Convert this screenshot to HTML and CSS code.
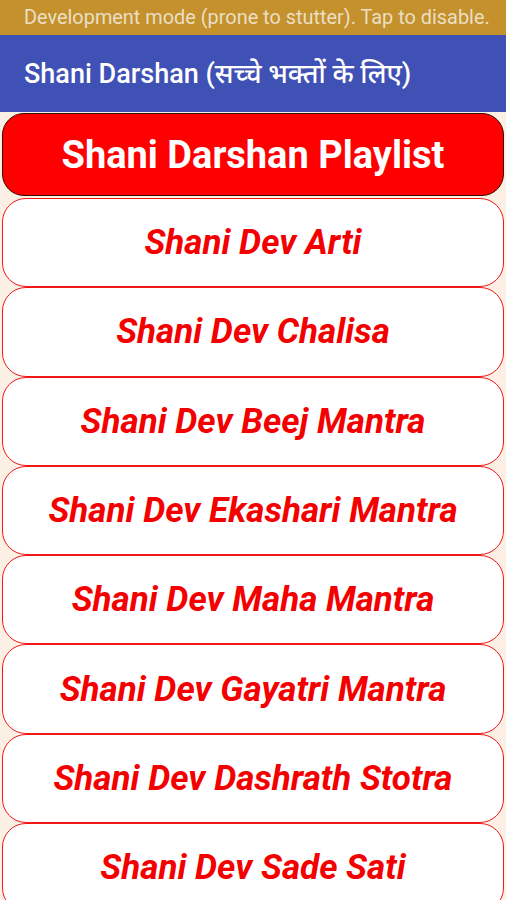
FILE: index.html
```html
<!DOCTYPE html>
<html>
<head>
<meta charset="utf-8">
<link rel="stylesheet" href="styles.css">
</head>
<body>
<div class="status">
  <span class="status-text">Development mode (prone to stutter). Tap to disable.</span>
</div>
<header class="appbar">Shani Darshan (सच्चे भक्तों के लिए)</header>
<main class="list">
  <div class="head">Shani Darshan Playlist</div>
  <div class="item">Shani Dev Arti</div>
  <div class="item">Shani Dev Chalisa</div>
  <div class="item">Shani Dev Beej Mantra</div>
  <div class="item">Shani Dev Ekashari Mantra</div>
  <div class="item">Shani Dev Maha Mantra</div>
  <div class="item">Shani Dev Gayatri Mantra</div>
  <div class="item">Shani Dev Dashrath Stotra</div>
  <div class="item">Shani Dev Sade Sati</div>
</main>
</body>
</html>
```
FILE: styles.css
```css
html, body {
  margin: 0;
  padding: 0;
}
body {
  width: 506px;
  height: 900px;
  overflow: hidden;
  background: #fcf0e5;
  font-family: Roboto, "Noto Sans", "Noto Sans Devanagari", sans-serif;
}
.status {
  height: 35px;
  background: #c4912c;
  display: flex;
  align-items: center;
  padding-left: 24px;
}
.status-text {
  font-size: 19.9px;
  white-space: nowrap;
  color: #eadfc6;
}
.appbar {
  height: 77px;
  background: #3f51b5;
  color: #ffffff;
  font-size: 27px;
  font-weight: 500;
  display: flex;
  align-items: center;
  padding-left: 24px;
  box-sizing: border-box;
  padding-bottom: 2px;
}
.list {
  display: flex;
  flex-direction: column;
  padding: 1px 2px 0;
}
.head {
  height: 83px;
  box-sizing: border-box;
  background: #ff0000;
  border: 1.5px solid #3a0a00;
  border-radius: 22px;
  color: #ffffff;
  font-size: 38px;
  font-weight: 700;
  display: flex;
  align-items: center;
  justify-content: center;
  margin-bottom: 2px;
}
.item {
  height: 89.3px;
  flex: none;
  box-sizing: border-box;
  background: #ffffff;
  border: 1px solid #f01818;
  border-radius: 24px;
  color: #f40000;
  font-size: 35px;
  font-weight: 700;
  font-style: italic;
  display: flex;
  align-items: center;
  justify-content: center;
}
```
